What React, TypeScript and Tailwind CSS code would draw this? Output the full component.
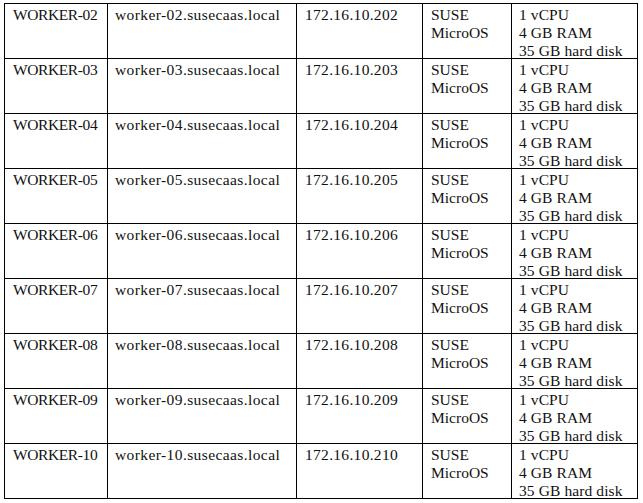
import React from "react";

const rows = ["02", "03", "04", "05", "06", "07", "08", "09", "10"];

export default function App() {
  const cell = "border-r border-b border-black h-[55px] pt-[2px] overflow-hidden whitespace-nowrap";
  return (
    <div className="bg-white w-[643px] h-[503px] overflow-hidden pl-[4px] pt-[3px]" style={{ fontFamily: '"Liberation Serif", serif' }}>
      <div className="grid grid-cols-[103px_189px_126px_89px_126px] w-[634px] border-l border-t border-black text-[15.5px] leading-[18px] text-[#111]">
        {rows.map((n) => (
          <React.Fragment key={n}>
            <div className={`${cell} pl-[8px] tracking-[-0.4px]`}>WORKER-{n}</div>
            <div className={`${cell} pl-[7px] tracking-[0.4px]`}>worker-{n}.susecaas.local</div>
            <div className={`${cell} pl-[8px] tracking-[0.3px]`}>172.16.10.2{n}</div>
            <div className={`${cell} pl-[8px]`}>SUSE<br />MicroOS</div>
            <div className={`${cell} pl-[7px] tracking-[0.1px]`}>1 vCPU<br />4 GB RAM<br />35 GB hard disk</div>
          </React.Fragment>
        ))}
      </div>
    </div>
  );
}
